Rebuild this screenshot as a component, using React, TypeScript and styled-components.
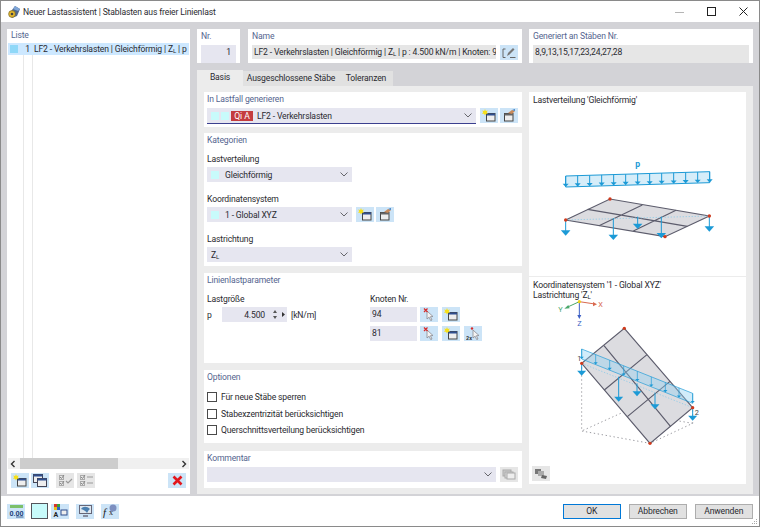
import React from 'react';
import styled, { createGlobalStyle } from 'styled-components';

const GlobalStyle = createGlobalStyle`
  html, body { margin: 0; padding: 0; background: #fff; }
  * { box-sizing: border-box; }
  body {
    font-family: Roboto, "Noto Sans", sans-serif;
    font-size: 8.6px;
    letter-spacing: -0.15px;
    color: #2a2a30;
  }
`;

const Window = styled.div`
  width: 760px;
  height: 527px;
  border: 1px solid #8a8a8a;
  display: flex;
  flex-direction: column;
  background: #fff;
  overflow: hidden;
`;

const TitleBar = styled.div`
  height: 21px;
  display: flex;
  align-items: center;
  padding-left: 6px;
  white-space: nowrap;
`;

const TitleText = styled.span`
  margin-left: 2px;
  flex: 1;
`;

const WinControls = styled.div`
  display: flex;
  align-items: center;
  gap: 21px;
  padding-right: 10px;
`;

const Main = styled.div`
  height: 474px;
  background: #d3d3d7;
  padding: 7px 6px 6px;
  display: grid;
  grid-template-columns: 183px 556px;
  gap: 7px;
`;

const Panel = styled.div`
  background: #fff;
  display: flex;
  flex-direction: column;
  min-width: 0;
`;

const Heading = styled.div`
  height: 12px;
  line-height: 12px;
  color: #55658f;
  white-space: nowrap;
`;

const ListPanel = styled(Panel)`
  padding: 0 1px 3px;
`;

const ListHeading = styled(Heading)`
  margin: 0 3px 2px;
  height: 12px;
`;

const ListBody = styled.div`
  flex: 1;
  position: relative;
  min-height: 0;
  background: linear-gradient(#e8e8e8, #e8e8e8) 15px 0 / 1px 100% no-repeat,
    linear-gradient(#e8e8e8, #e8e8e8) 24px 0 / 1px 100% no-repeat;
`;

const ListRow = styled.div`
  height: 12px;
  background: #cde8ff;
  display: flex;
  align-items: center;
  overflow: hidden;
  white-space: nowrap;
`;

const Swatch = styled.span<{ $color?: string }>`
  flex: none;
  display: inline-block;
  width: 8px;
  height: 8px;
  background: ${({ $color }) => $color || '#c8fbfb'};
`;

const ListSwatch = styled(Swatch)`
  margin-left: 2px;
`;

const RowNo = styled.span`
  flex: none;
  width: 12px;
  text-align: right;
  margin-right: 4px;
`;

const RowText = styled.span`
  flex: none;
`;

const ScrollBar = styled.div`
  height: 11px;
  margin-top: 0;
  background: #f0f0f0;
  display: flex;
  align-items: center;
  justify-content: space-between;
  position: relative;
  padding: 0 2px;
`;

const ScrollThumb = styled.div`
  position: absolute;
  left: 12px;
  width: 98px;
  top: 0;
  bottom: 0;
  background: #cdcdcd;
`;

const ListToolbar = styled.div`
  display: flex;
  gap: 2px;
  padding: 4px 3px 0;
  height: 22px;
`;

const IconBtn = styled.button<{ $off?: boolean; $ml?: number }>`
  flex: none;
  width: 18px;
  height: 15px;
  padding: 0;
  border: 0;
  background: ${({ $off }) => ($off ? '#e6e6e6' : '#cce4f7')};
  margin-left: ${({ $ml }) => $ml ?? 0}px;
  display: flex;
  align-items: center;
  justify-content: center;
`;

const RightCol = styled.div`
  display: flex;
  flex-direction: column;
  min-width: 0;
`;

const TopRow = styled.div`
  height: 34px;
  display: flex;
  margin-bottom: 7px;
`;

const TopCard = styled(Panel)<{ $w: number; $mr?: number }>`
  width: ${({ $w }) => $w}px;
  margin-right: ${({ $mr }) => $mr ?? 0}px;
  padding: 0 4px;
`;

const TopHeading = styled(Heading)`
  margin: 1px 0 3px;
`;

const TopFieldRow = styled.div`
  display: flex;
  gap: 4px;
`;

const ReadOnly = styled.div<{ $tint?: boolean; $right?: boolean }>`
  flex: 1;
  height: 14px;
  line-height: 14px;
  min-width: 0;
  padding: 0 ${({ $right }) => ($right ? 5 : 0)}px 0 2px;
  background: ${({ $tint }) => ($tint ? '#e6e6f0' : '#e6e6e6')};
  text-align: ${({ $right }) => ($right ? 'right' : 'left')};
  overflow: hidden;
  white-space: nowrap;
`;

const Tabs = styled.div`
  display: flex;
  height: 16px;
  align-items: flex-end;
`;

const Tab = styled.div<{ $active?: boolean; $w: number }>`
  width: ${({ $w }) => $w}px;
  height: ${({ $active }) => ($active ? 16 : 15)}px;
  line-height: 15px;
  text-align: center;
  background: ${({ $active }) => ($active ? '#ececec' : '#e1e1e1')};
  white-space: nowrap;
`;

const TabBody = styled.div`
  flex: 1;
  background: #ececec;
  padding: 6px 7px;
  display: grid;
  grid-template-columns: 318px 217px;
  gap: 7px;
  min-height: 0;
`;

const LeftStack = styled.div`
  display: flex;
  flex-direction: column;
`;

const Section = styled(Panel)<{ $h: number; $mt?: number }>`
  height: ${({ $h }) => $h}px;
  margin-top: ${({ $mt }) => $mt ?? 0}px;
  padding: 1px 3px 0;
`;

const SelectRow = styled.div<{ $mt?: number }>`
  display: flex;
  gap: 4px;
  align-items: flex-start;
  margin-top: ${({ $mt }) => $mt ?? 0}px;
`;

const BtnGroup = styled.div`
  display: flex;
  gap: 2px;
`;

const SelectBox = styled.div<{ $w: number; $underline?: boolean }>`
  width: ${({ $w }) => $w}px;
  height: ${({ $underline }) => ($underline ? 16 : 15)}px;
  background: #e6e6f0;
  display: flex;
  align-items: center;
  gap: 2px;
  padding: 0 4px;
  position: relative;
  white-space: nowrap;
  border-bottom: ${({ $underline }) => ($underline ? '1px solid #3b3f8f' : '0')};
`;

const SelectText = styled.span<{ $ml?: number }>`
  flex: 1;
  margin-left: ${({ $ml }) => $ml ?? 0}px;
`;

const Badge = styled.span`
  background: #c43c3f;
  color: #fff;
  width: 22px;
  height: 10px;
  line-height: 10px;
  text-align: center;
  letter-spacing: 0;
  margin-right: 2px;
`;

const Field = styled.div<{ $mt: number }>`
  margin-top: ${({ $mt }) => $mt}px;
  display: flex;
  flex-direction: column;
  gap: 2px;
`;

const Label = styled.div`
  height: 12px;
  line-height: 12px;
`;

const ParamGrid = styled.div`
  display: grid;
  grid-template-columns: 163px 1fr;
  margin-top: 7px;
`;

const ParamRow = styled.div`
  display: flex;
  align-items: center;
  height: 15px;
`;

const ParamColumn = styled.div`
  display: flex;
  flex-direction: column;
  gap: 2px;
`;

const NodeRows = styled.div`
  display: flex;
  flex-direction: column;
  gap: 4px;
`;

const Symbol = styled.span`
  width: 15px;
`;

const NumberBox = styled.div`
  width: 65px;
  height: 15px;
  background: #e6e6f0;
  display: flex;
  align-items: center;
  justify-content: flex-end;
  padding-right: 2px;
  gap: 7px;
`;

const Unit = styled.span`
  margin-left: 4px;
`;

const NodeBox = styled.div`
  width: 47px;
  height: 15px;
  line-height: 15px;
  padding-left: 2px;
  background: #e6e6f0;
  margin-right: 3px;
`;

const NodeButtons = styled.div`
  display: flex;
  gap: 4px;
`;

const CheckList = styled.div`
  margin-top: 8px;
  display: flex;
  flex-direction: column;
  gap: 4.5px;
`;

const CheckRow = styled.label`
  height: 12px;
  display: flex;
  align-items: center;
  gap: 4px;
`;

const CheckBox = styled.span`
  width: 10px;
  height: 10px;
  border: 1px solid #4a4a4a;
  background: #fff;
`;

const Preview = styled(Panel)`
  height: 392px;
  position: relative;
`;

const PreviewPane = styled.div<{ $h: number; $line?: boolean }>`
  height: ${({ $h }) => $h}px;
  display: flex;
  flex-direction: column;
  border-bottom: ${({ $line }) => ($line ? '1px solid #ececec' : '0')};
`;

const PreviewLabel = styled.div<{ $h: number }>`
  height: ${({ $h }) => $h}px;
  padding: 3px 4px 0;
  line-height: 10px;
  white-space: nowrap;
`;

const OverlayBtn = styled(IconBtn)`
  position: absolute;
  left: 3px;
  bottom: 3px;
`;

const Footer = styled.div`
  height: 30px;
  display: flex;
  align-items: center;
  padding: 0 6px;
  position: relative;
`;

const ColorSwatch = styled.div`
  width: 17px;
  height: 16px;
  margin-left: 6px;
  margin-right: 3px;
  background: #c8fbfb;
  border: 1px solid #55555c;
`;

const DialogButtons = styled.div`
  margin-left: auto;
  display: flex;
  gap: 7.5px;
`;

const DialogBtn = styled.button<{ $primary?: boolean }>`
  width: 58.5px;
  height: 15px;
  padding: 0;
  background: #e1e1e1;
  border: 1px solid ${({ $primary }) => ($primary ? '#0078d7' : '#adadad')};
  font: 8.6px Roboto, sans-serif;
  letter-spacing: -0.15px;
  color: #2a2a30;
  line-height: 12px;
`;

const Grip = styled.svg`
  position: absolute;
  right: 1px;
  bottom: 1px;
`;

const Sub = styled.sub`
  font-size: 6px;
  vertical-align: -1px;
  line-height: 0;
`;

const DrawingSvg = styled.svg`
  display: block;
`;

const Chevron = () => (
  <svg width="8" height="5" viewBox="0 0 8 5">
    <path d="M.5.5 4 4 7.5.5" fill="none" stroke="#66666c" strokeWidth="1" />
  </svg>
);

const WinIcon = () => (
  <svg width="14" height="13" viewBox="0 0 14 13">
    <rect x="4.5" y="4.5" width="8.5" height="7.5" fill="#eee" stroke="#444" />
    <rect x="4.5" y="4.5" width="8.5" height="2" fill="#2f4f8f" />
    <path d="M3 0l.8 2 2-.6-1 1.8 1.2 1.6-2-.1L3 6.5 2 4.7l-2 .1 1.2-1.6-1-1.8 2 .6z" fill="#f7e017" />
  </svg>
);

const EditWinIcon = () => (
  <svg width="14" height="13" viewBox="0 0 14 13">
    <rect x="2.5" y="4.5" width="8.5" height="7.5" fill="#eee" stroke="#444" />
    <rect x="2.5" y="4.5" width="8.5" height="2" fill="#666" />
    <path d="M6 4l4-3 3 1-3 3z" fill="#c98a5a" />
    <path d="M10 1l3-1v2z" fill="#3f7fc4" />
  </svg>
);

const CopyWinIcon = () => (
  <svg width="14" height="13" viewBox="0 0 14 13">
    <rect x=".5" y=".5" width="9" height="8" fill="#eee" stroke="#445" />
    <rect x=".5" y=".5" width="9" height="2" fill="#2f4f8f" />
    <rect x="4.5" y="4.5" width="9" height="8" fill="#eee" stroke="#445" />
    <rect x="4.5" y="4.5" width="9" height="2" fill="#2f4f8f" />
  </svg>
);

const PickIcon = () => (
  <svg width="12" height="13" viewBox="0 0 12 13">
    <path d="M4 3l6 5.5-2.6.2L9 12l-1.3.6-1.6-3.4L4 11z" fill="#f4f4f4" stroke="#8a8a92" strokeWidth=".8" />
    <path d="M1 .5l3.5 3.5M4.5.5L1 4" stroke="#d62b2b" strokeWidth="1.2" />
  </svg>
);

const PickTwiceIcon = () => (
  <svg width="15" height="13" viewBox="0 0 15 13">
    <path d="M7 3l6 5.5-2.6.2 1.6 3.3-1.3.6-1.6-3.4L7 11z" fill="#f4f4f4" stroke="#8a8a92" strokeWidth=".8" />
    <circle cx="6" cy="1.5" r="1.2" fill="#d62b2b" />
    <text x="0" y="12.5" fontSize="5.5" fontFamily="Roboto" fontWeight="700" fill="#333">2x</text>
  </svg>
);

const RenameIcon = () => (
  <svg width="14" height="12" viewBox="0 0 14 12">
    <path d="M3.5 2H1v8.5h2.5M8 10.5h5.5" fill="none" stroke="#666" />
    <path d="M5 9l1-3 5-5 1.5 1.5-5 5z" fill="#777" />
  </svg>
);

const CheckAllIcon = ({ mixed = false }: { mixed?: boolean }) => (
  <svg width="15" height="13" viewBox="0 0 15 13">
    <rect x="1.5" y="1.5" width="4" height="4" fill="none" stroke="#aaa" />
    <rect x="1.5" y="7.5" width="4" height="4" fill="none" stroke="#aaa" />
    <path d="M2 3l1.5 1.5L6 1M2 9l1.5 1.5L6 7" fill="none" stroke="#888" />
    <path d={mixed ? 'M8 3h6M8 9h6' : 'M8 7l2 2 4-4'} fill="none" stroke="#999" strokeWidth="1.2" />
  </svg>
);

const RedCross = () => (
  <svg width="11" height="11" viewBox="0 0 11 11">
    <path d="M1.5 1.5l8 8M9.5 1.5l-8 8" stroke="#e3171c" strokeWidth="2.6" />
  </svg>
);

const CommentIcon = () => (
  <svg width="14" height="11" viewBox="0 0 14 11">
    <rect x="1" y="1" width="8" height="6" fill="#ccc" stroke="#aaa" />
    <rect x="3" y="3" width="8" height="6" fill="#ddd" stroke="#aaa" />
    <rect x="5" y="4" width="8" height="6" fill="#eee" stroke="#aaa" />
  </svg>
);

const ViewIcon = () => (
  <svg width="14" height="12" viewBox="0 0 14 12">
    <rect x="1" y="1" width="6" height="5" fill="#777" />
    <rect x="4" y="3" width="6" height="5" fill="#aaa" />
    <path d="M8 7l5 1-1 3-5-1z" fill="#666" />
  </svg>
);

const NumberIcon = () => (
  <svg width="15" height="13" viewBox="0 0 15 13">
    <rect x="1" y="0" width="13" height="3" fill="#7cc06a" />
    <text x=".5" y="10.5" fontSize="7" fontWeight="700" fontFamily="Roboto" fill="#1c3f7a">0.00</text>
    <path d="M7 12h7.5" stroke="#1c3f7a" strokeWidth=".8" />
  </svg>
);

const ColorTextIcon = () => (
  <svg width="16" height="14" viewBox="0 0 16 14">
    <rect x="2" y="0" width="3" height="3" fill="#d8342c" />
    <rect x="5" y="0" width="3" height="3" fill="#3aa03a" />
    <rect x="2" y="3" width="3" height="3" fill="#e8c020" />
    <rect x="5" y="3" width="3" height="3" fill="#2c5fc8" />
    <text x="1.5" y="12.5" fontSize="7" fontWeight="700" fontFamily="Roboto" fill="#222">A</text>
    <rect x="9" y="6" width="6" height="5" fill="#eee" stroke="#2f4f8f" />
  </svg>
);

const ScreenIcon = () => (
  <svg width="15" height="14" viewBox="0 0 15 14">
    <rect x="1.5" y="1.5" width="12" height="8" fill="#dfe8f0" stroke="#667" />
    <path d="M3 5c2-3 6-3 9 0-2 1-2 3-3 4-1-2-3-3-6-4z" fill="#4a7fb0" />
    <path d="M5 12h5" stroke="#667" strokeWidth="1.4" />
  </svg>
);

const FormulaIcon = () => (
  <svg width="16" height="14" viewBox="0 0 16 14">
    <circle cx="11" cy="4" r="3.5" fill="#7d8fc0" />
    <text x="1" y="12" fontSize="11" fontStyle="italic" fontFamily="Liberation Serif" fill="#222">f</text>
    <text x="7" y="11" fontSize="8" fontFamily="Liberation Serif" fill="#222">x</text>
  </svg>
);

const AppIcon = () => (
  <svg width="14" height="14" viewBox="0 0 14 14">
    <path d="M2 9l6-8 5 3-3 7-5 2z" fill="#51688f" />
    <path d="M8 1l5 3-2 2-5-2z" fill="#7fa6d8" />
    <circle cx="5" cy="9" r="3.4" fill="#e4b92f" stroke="#6a5a20" strokeWidth=".6" />
    <circle cx="5" cy="9" r="1.3" fill="#444" />
  </svg>
);

const Spin = () => (
  <svg width="13" height="11" viewBox="0 0 13 11">
    <path d="M1 4l2-3 2 3zM1 7l2 3 2-3z" fill="#555" />
    <path d="M10 3l3 2.5-3 2.5z" fill="#333" />
  </svg>
);

const Arrow = ({ x, y1, y2, h = 10, w = 3 }: { x: number; y1: number; y2: number; h?: number; w?: number }) => (
  <g>
    <path d={`M${x} ${y1}V${y2 - h + 2}`} stroke="#1c9ad6" strokeWidth={w} fill="none" />
    <path d={`M${x - h * 0.9} ${y2 - h}H${x + h * 0.9}L${x} ${y2}z`} fill="#1c9ad6" />
  </g>
);

const Node = ({ x, y }: { x: number; y: number }) => <circle cx={x} cy={y} r="5" fill="#d13a1c" />;

const uniformTicks = Array.from({ length: 13 }, (_, i) => 122 + i * 36);

const UniformLoad = () => (
  <DrawingSvg width="217" height="168" viewBox="12 54 651 504">
    <text x="338" y="231" fontSize="26" fontWeight="700" fontFamily="Roboto" fill="#1c9ad6" textAnchor="middle">p</text>
    <path d="M122 258 554 245V278L122 291z" fill="#d6edf9" stroke="#1c9ad6" strokeWidth="3" />
    {uniformTicks.map((x) => {
      const top = 258 - ((x - 122) * 13) / 432;
      return <Arrow key={x} x={x} y1={top} y2={top + 33} h={10} />;
    })}
    <path d="M122 390 255 327 553 378 420 440z" fill="#dcdce0" stroke="#5c5c6c" strokeWidth="3.5" />
    <path d="M188 358 487 409M352 345 222 407M453 361 325 423" stroke="#5c5c6c" strokeWidth="3.5" fill="none" />
    <path d="M122 390 553 378" stroke="#8fcbe8" strokeWidth="2.5" strokeDasharray="4 5" fill="none" />
    <Arrow x={122} y1={390} y2={437} h={16} />
    <Arrow x={265} y1={385} y2={450} h={16} />
    <Arrow x={338} y1={380} y2={417} h={16} />
    <Arrow x={409} y1={380} y2={445} h={16} />
    <Arrow x={553} y1={378} y2={425} h={16} />
    <Node x={122} y={390} />
    <Node x={255} y={327} />
    <Node x={553} y={378} />
    <Node x={420} y={440} />
  </DrawingSvg>
);

const skewTicks = [170, 212, 254, 296, 337, 379, 421, 462, 503];

const SkewLoad = () => (
  <DrawingSvg width="217" height="184" viewBox="12 75 651 552">
    <path d="M163 80 210 87" stroke="#d9694f" strokeWidth="3" />
    <path d="M216 88 204 81V94z" fill="#d9694f" />
    <text x="220" y="97" fontSize="22" fontFamily="Roboto" fill="#d9694f">X</text>
    <path d="M163 80 126 97" stroke="#4aa86a" strokeWidth="3" />
    <path d="M118 101 130 90 134 100z" fill="#4aa86a" />
    <text x="100" y="112" fontSize="22" fontFamily="Roboto" fill="#4aa86a">Y</text>
    <path d="M163 80V124" stroke="#3c5fc4" strokeWidth="3" />
    <path d="M163 132 157 120H169z" fill="#3c5fc4" />
    <text x="157" y="154" fontSize="22" fontFamily="Roboto" fill="#3c5fc4">Z</text>
    <circle cx="163" cy="80" r="5" fill="#efd21a" />
    <path
      d="M298 160V410M170 265V468L375 505 503 445V398M298 410 170 468M298 410 503 445"
      stroke="#9a9aa0"
      strokeWidth="3"
      strokeDasharray="4 8"
      fill="none"
    />
    <path d="M298 160 503 398 375 505 170 265z" fill="#dcdce0" stroke="#5c5c6c" strokeWidth="3.5" />
    <path d="M237 212 437 455M366 239 238 345M435 319 307 425" stroke="#5c5c6c" strokeWidth="3.5" fill="none" />
    <path d="M170 265 503 398" stroke="#8fcbe8" strokeWidth="2.5" strokeDasharray="4 5" fill="none" />
    <path d="M170 222 503 355V385L170 252z" fill="#8fd0f2" fillOpacity=".4" stroke="#1c9ad6" strokeWidth="2" />
    {skewTicks.map((x) => {
      const top = 222 + ((x - 170) * 133) / 333;
      return <Arrow key={x} x={x} y1={top} y2={top + 30} h={7} w={2} />;
    })}
    <Arrow x={170} y1={265} y2={302} h={15} />
    <Arrow x={281} y1={305} y2={380} h={15} />
    <Arrow x={336} y1={325} y2={364} h={15} />
    <Arrow x={390} y1={355} y2={403} h={15} />
    <Arrow x={503} y1={398} y2={437} h={15} />
    <text x="157" y="258" fontSize="22" fontFamily="Roboto" fill="#444">1</text>
    <text x="509" y="420" fontSize="22" fontFamily="Roboto" fill="#444">2</text>
    <Node x={298} y={160} />
    <Node x={170} y={265} />
    <Node x={503} y={398} />
    <Node x={375} y={505} />
  </DrawingSvg>
);

export default function App() {
  return (
    <>
      <GlobalStyle />
      <Window>
        <TitleBar>
          <AppIcon />
          <TitleText>Neuer Lastassistent | Stablasten aus freier Linienlast</TitleText>
          <WinControls>
            <svg width="11" height="10" viewBox="0 0 11 10"><path d="M1 5.5h9" stroke="#b5b5b5" /></svg>
            <svg width="11" height="10" viewBox="0 0 11 10"><rect x="1.5" y=".5" width="8" height="8" fill="none" stroke="#222" /></svg>
            <svg width="11" height="10" viewBox="0 0 11 10"><path d="M1.5.5l8 8M9.5.5l-8 8" stroke="#222" /></svg>
          </WinControls>
        </TitleBar>

        <Main>
          <ListPanel>
            <ListHeading>Liste</ListHeading>
            <ListBody>
              <ListRow>
                <ListSwatch $color="#8fd8f8" />
                <RowNo>1</RowNo>
                <RowText>LF2 - Verkehrslasten | Gleichförmig | Z<Sub>L</Sub> | p</RowText>
              </ListRow>
            </ListBody>
            <ScrollBar>
              <svg width="6" height="8" viewBox="0 0 6 8"><path d="M4.5 1 1.5 4l3 3" fill="none" stroke="#333" strokeWidth="1.4" /></svg>
              <ScrollThumb />
              <svg width="6" height="8" viewBox="0 0 6 8"><path d="M1.5 1l3 3-3 3" fill="none" stroke="#333" strokeWidth="1.4" /></svg>
            </ScrollBar>
            <ListToolbar>
              <IconBtn><WinIcon /></IconBtn>
              <IconBtn><CopyWinIcon /></IconBtn>
              <IconBtn $off $ml={5}><CheckAllIcon /></IconBtn>
              <IconBtn $off $ml={1}><CheckAllIcon mixed /></IconBtn>
              <IconBtn $ml={71}><RedCross /></IconBtn>
            </ListToolbar>
          </ListPanel>

          <RightCol>
            <TopRow>
              <TopCard $w={43} $mr={8}>
                <TopHeading>Nr.</TopHeading>
                <ReadOnly $tint $right>1</ReadOnly>
              </TopCard>
              <TopCard $w={274} $mr={7}>
                <TopHeading>Name</TopHeading>
                <TopFieldRow>
                  <ReadOnly>LF2 - Verkehrslasten | Gleichförmig | Z<Sub>L</Sub> | p : 4.500 kN/m | Knoten: 94,81</ReadOnly>
                  <IconBtn><RenameIcon /></IconBtn>
                </TopFieldRow>
              </TopCard>
              <TopCard $w={224}>
                <TopHeading>Generiert an Stäben Nr.</TopHeading>
                <ReadOnly>8,9,13,15,17,23,24,27,28</ReadOnly>
              </TopCard>
            </TopRow>

            <Tabs>
              <Tab $active $w={46}>Basis</Tab>
              <Tab $w={96}>Ausgeschlossene Stäbe</Tab>
              <Tab $w={54}>Toleranzen</Tab>
            </Tabs>

            <TabBody>
              <LeftStack>
                <Section $h={35}>
                  <Heading>In Lastfall generieren</Heading>
                  <SelectRow $mt={3}>
                    <SelectBox $w={269} $underline>
                      <Swatch />
                      <Swatch />
                      <Badge>Qi A</Badge>
                      <SelectText>LF2 - Verkehrslasten</SelectText>
                      <Chevron />
                    </SelectBox>
                    <BtnGroup>
                      <IconBtn><WinIcon /></IconBtn>
                      <IconBtn><EditWinIcon /></IconBtn>
                    </BtnGroup>
                  </SelectRow>
                </Section>

                <Section $h={133} $mt={6}>
                  <Heading>Kategorien</Heading>
                  <Field $mt={7}>
                    <Label>Lastverteilung</Label>
                    <SelectBox $w={145}>
                      <Swatch />
                      <SelectText $ml={4}>Gleichförmig</SelectText>
                      <Chevron />
                    </SelectBox>
                  </Field>
                  <Field $mt={11}>
                    <Label>Koordinatensystem</Label>
                    <SelectRow>
                      <SelectBox $w={145}>
                        <Swatch />
                        <SelectText $ml={4}>1 - Global XYZ</SelectText>
                        <Chevron />
                      </SelectBox>
                      <BtnGroup>
                        <IconBtn><WinIcon /></IconBtn>
                        <IconBtn><EditWinIcon /></IconBtn>
                      </BtnGroup>
                    </SelectRow>
                  </Field>
                  <Field $mt={11}>
                    <Label>Lastrichtung</Label>
                    <SelectBox $w={145}>
                      <SelectText>Z<Sub>L</Sub></SelectText>
                      <Chevron />
                    </SelectBox>
                  </Field>
                </Section>

                <Section $h={90} $mt={7}>
                  <Heading>Linienlastparameter</Heading>
                  <ParamGrid>
                    <ParamColumn>
                      <Label>Lastgröße</Label>
                      <ParamRow>
                        <Symbol>p</Symbol>
                        <NumberBox>4.500 <Spin /></NumberBox>
                        <Unit>[kN/m]</Unit>
                      </ParamRow>
                    </ParamColumn>
                    <ParamColumn>
                      <Label>Knoten Nr.</Label>
                      <NodeRows>
                        <ParamRow>
                          <NodeBox>94</NodeBox>
                          <NodeButtons>
                            <IconBtn><PickIcon /></IconBtn>
                            <IconBtn><WinIcon /></IconBtn>
                          </NodeButtons>
                        </ParamRow>
                        <ParamRow>
                          <NodeBox>81</NodeBox>
                          <NodeButtons>
                            <IconBtn><PickIcon /></IconBtn>
                            <IconBtn><WinIcon /></IconBtn>
                            <IconBtn><PickTwiceIcon /></IconBtn>
                          </NodeButtons>
                        </ParamRow>
                      </NodeRows>
                    </ParamColumn>
                  </ParamGrid>
                </Section>

                <Section $h={73} $mt={7}>
                  <Heading>Optionen</Heading>
                  <CheckList>
                    <CheckRow><CheckBox />Für neue Stäbe sperren</CheckRow>
                    <CheckRow><CheckBox />Stabexzentrizität berücksichtigen</CheckRow>
                    <CheckRow><CheckBox />Querschnittsverteilung berücksichtigen</CheckRow>
                  </CheckList>
                </Section>

                <Section $h={37} $mt={8}>
                  <Heading>Kommentar</Heading>
                  <SelectRow $mt={3}>
                    <SelectBox $w={289}>
                      <SelectText />
                      <Chevron />
                    </SelectBox>
                    <IconBtn $off><CommentIcon /></IconBtn>
                  </SelectRow>
                </Section>
              </LeftStack>

              <Preview>
                <PreviewPane $h={185} $line>
                  <PreviewLabel $h={16}>Lastverteilung 'Gleichförmig'</PreviewLabel>
                  <UniformLoad />
                </PreviewPane>
                <PreviewPane $h={207}>
                  <PreviewLabel $h={23}>
                    Koordinatensystem '1 - Global XYZ'
                    <br />
                    Lastrichtung 'Z<Sub>L</Sub>'
                  </PreviewLabel>
                  <SkewLoad />
                </PreviewPane>
                <OverlayBtn $off><ViewIcon /></OverlayBtn>
              </Preview>
            </TabBody>
          </RightCol>
        </Main>

        <Footer>
          <IconBtn><NumberIcon /></IconBtn>
          <ColorSwatch />
          <IconBtn><ColorTextIcon /></IconBtn>
          <IconBtn $ml={7}><ScreenIcon /></IconBtn>
          <IconBtn $ml={7}><FormulaIcon /></IconBtn>
          <DialogButtons>
            <DialogBtn $primary>OK</DialogBtn>
            <DialogBtn>Abbrechen</DialogBtn>
            <DialogBtn>Anwenden</DialogBtn>
          </DialogButtons>
          <Grip width="7" height="7" viewBox="0 0 7 7">
            <path d="M5 1h1v1H5zM3 3h1v1H3zM5 3h1v1H5zM1 5h1v1H1zM3 5h1v1H3zM5 5h1v1H5z" fill="#a8a8a8" />
          </Grip>
        </Footer>
      </Window>
    </>
  );
}
